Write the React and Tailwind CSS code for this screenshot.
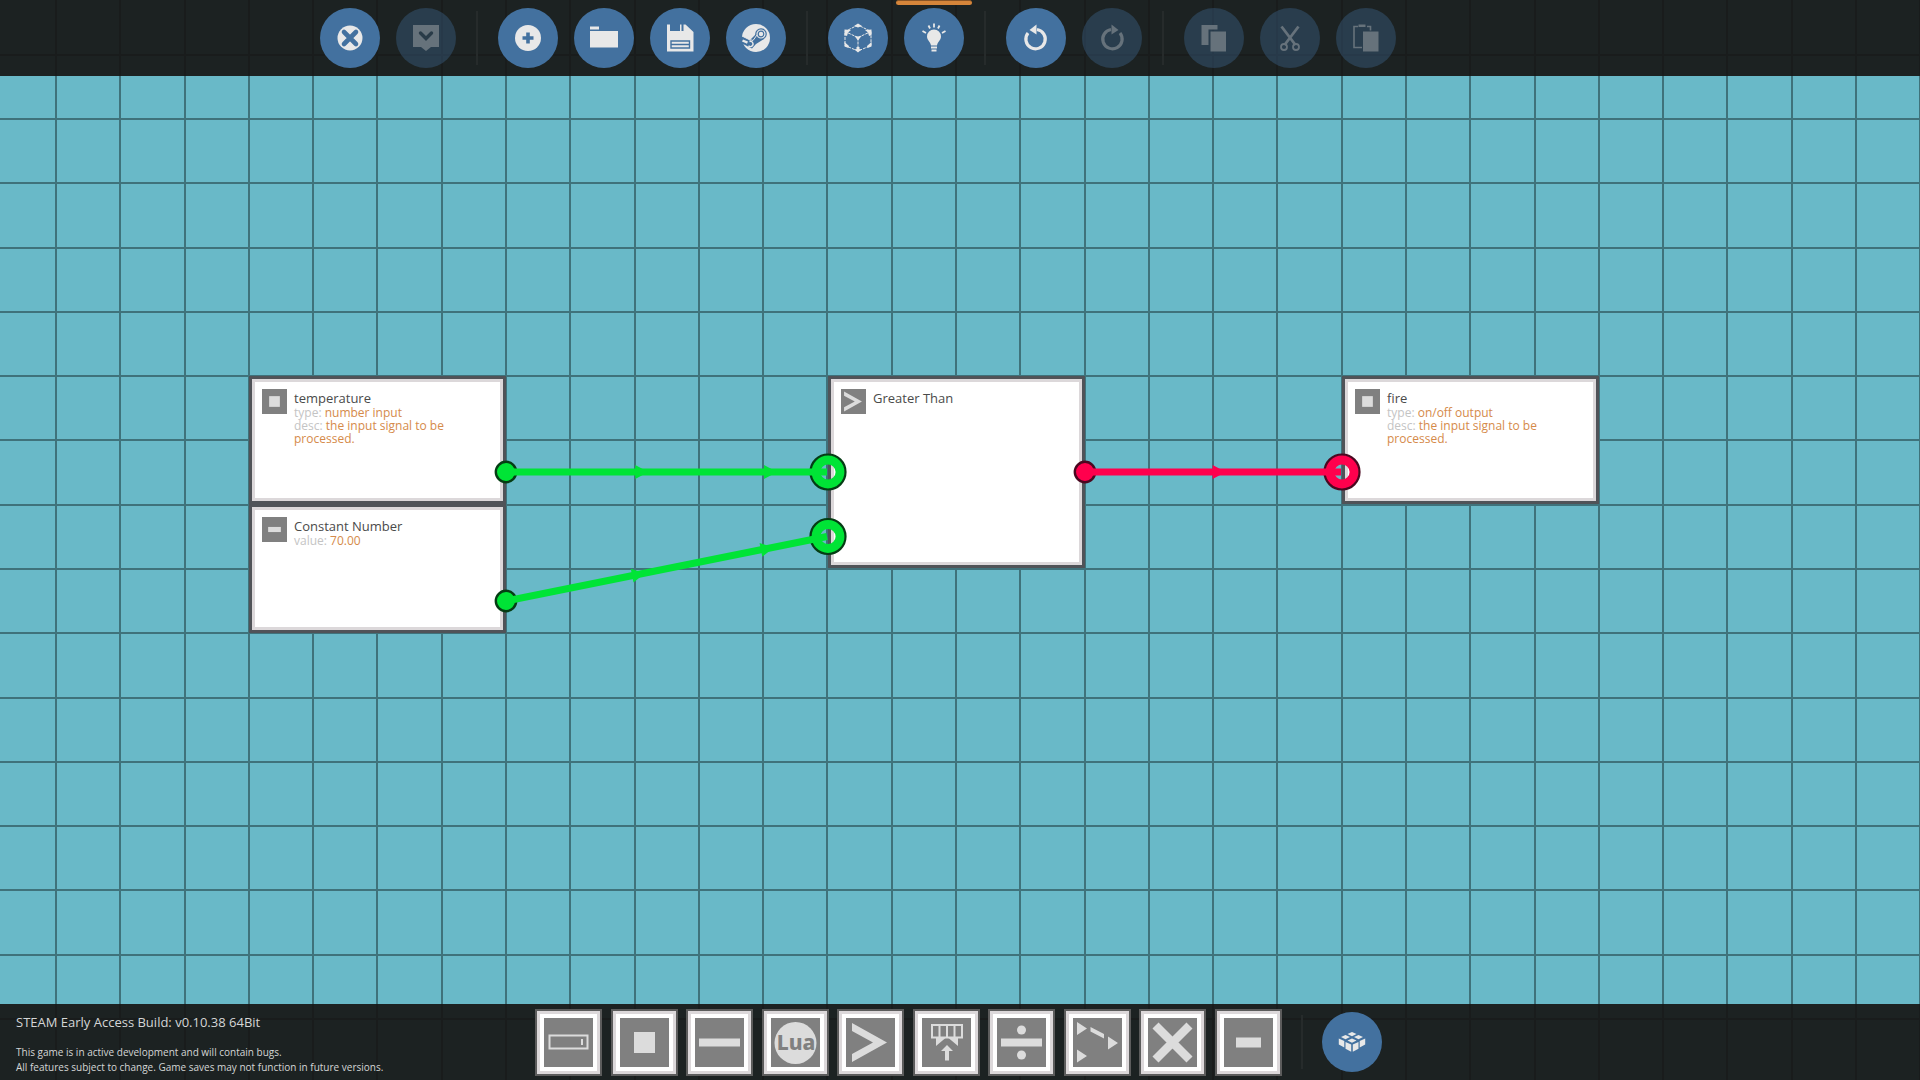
import { clsx } from "clsx";

const CELL = 450 / 7;

const range = (n) => Array.from({ length: n }, (_, i) => i);

/* ---------- toolbar icons ---------- */

const icons = {
  close: (
    <>
      <circle cx="15" cy="15" r="12.5" fill="currentColor" />
      <path d="M9 9l12 12M21 9L9 21" stroke="#43719f" strokeWidth="4.6" strokeLinecap="round" />
    </>
  ),
  apply: (
    <>
      <path d="M2 2h26v22h-8l-5 4-5-4H2z" fill="currentColor" />
      <path d="M9.500 10l5.500 5.500 5.500-5.500" stroke="#293b48" strokeWidth="3.400" strokeLinecap="round" fill="none" />
    </>
  ),
  add: (
    <>
      <circle cx="15" cy="15" r="13" fill="currentColor" />
      <path d="M15 9.500v11M9.500 15h11" stroke="#43719f" strokeWidth="3.600" />
    </>
  ),
  open: <path d="M1 3.500h9v3H1zM1 8h28v16.500H1z" fill="currentColor" />,
  save: (
    <>
      <path
        d="M2 1.500h3V8h10V1.500h1.500V8h2V1.500h2l8 7.500v19.500H2z"
        fill="currentColor"
      />
      <path d="M6 18h18.500v7H6zM6 21.500h18.500" stroke="#43719f" strokeWidth="1.400" fill="none" />
    </>
  ),
  steam: (
    <>
      <circle cx="15" cy="15" r="14" fill="currentColor" />
      <path d="M0 12.500l9 4.500 6-6 8 5-8 5-4 4.500L0 20z" fill="#43719f" />
      <circle cx="20" cy="11" r="5.800" fill="#43719f" />
      <circle cx="20" cy="11" r="4" fill="none" stroke="currentColor" strokeWidth="1.200" />
      <circle cx="20" cy="11" r="2.200" fill="currentColor" />
      <path d="M1 13l8 4a4.500 4.500 0 0 1 3 .5L16 12" fill="none" stroke="currentColor" strokeWidth="1" />
      <path d="M1.500 17.500l5 2.200" stroke="currentColor" strokeWidth="2.400" />
      <path d="M8.500 18.500a2.600 2.600 0 1 1-1 4.200" fill="none" stroke="currentColor" strokeWidth="1.400" />
    </>
  ),
  cube: (
    <>
      <path
        d="M15 2L2 8.500v14L15 28l13-5.500v-14zM15 14.500v13M15 14.500L2 8.500M15 14.500l13-6"
        fill="none"
        stroke="currentColor"
        strokeWidth="1"
        strokeDasharray="3 1"
      />
      <path
        d="M15 .5l4 2.500-4 1.500L11 3zM1.500 6.500l6.500.500-3 2.500-1 3.500-2.500-1zM28.500 6.500L22 7l3 2.500 1 3.500 2.500-1zM15 17.500l-3.500-4.500 3.500.500 3.500-.500zM1.500 19l4.500 4-.500 2-4-1.500zM28.500 19L24 23l.5 2 4-1.500zM13.500 24h3v2l2 .5L15 29.500l-3.500-3 2-.5z"
        fill="currentColor"
      />
    </>
  ),
  bulb: (
    <>
      <path d="M15 6.500a7 7 0 0 1 7 7c0 4-3.500 5-4 9h-6c-.5-4-4-5-4-9a7 7 0 0 1 7-7z" fill="currentColor" />
      <path
        d="M12 24.500h6M12.500 27.500h5M15 .5v4M9.500 2.500l1.500 3M20.500 2.500l-1.500 3M3.500 8l3.500 2M26.500 8L23 10"
        stroke="currentColor"
        strokeWidth="1.800"
      />
    </>
  ),
  undo: (
    <>
      <path d="M7 10a9.700 9.700 0 1 0 9-3.500" fill="none" stroke="currentColor" strokeWidth="3.200" />
      <path d="M15.500 1.500v10L8.500 7z" fill="currentColor" />
    </>
  ),
  redo: (
    <>
      <path d="M23 10a9.700 9.700 0 1 1-9-3.500" fill="none" stroke="currentColor" strokeWidth="3.200" />
      <path d="M14.500 1.500v10l7-4.500z" fill="currentColor" />
    </>
  ),
  copy: <path d="M2.500 2h16v4.500H9.500V22h-7zM11.500 8.500h15.500v20H11.500z" fill="currentColor" />,
  cut: (
    <>
      <path d="M6.500 3.500L20.500 22M23.500 3.500L9.500 22" stroke="currentColor" strokeWidth="2.800" />
      <circle cx="9" cy="24" r="3" fill="none" stroke="currentColor" strokeWidth="1.800" />
      <circle cx="21" cy="24" r="3" fill="none" stroke="currentColor" strokeWidth="1.800" />
    </>
  ),
  paste: (
    <>
      <path
        d="M7 3.500H3v21h8M16 3.500h3.500v4"
        fill="none"
        stroke="currentColor"
        strokeWidth="1.600"
      />
      <path d="M7.500 1.500h7V4h-7zM12 8.500h15.500v20H12z" fill="currentColor" />
    </>
  ),
  blocks: (
    <g fill="currentColor">
      <path d="M15 5l4.500 2L15 9.200 10.500 7zM8.500 8l4.500 2-4.500 2.200L4 10zM21.500 8l4.500 2-4.500 2.200L17 10zM15 11.500l4.500 2-4.500 2.200-4.500-2.200z" />
      <path d="M1.800 11.500l5.500 2.600v6.400l-5.500-3zM28.200 11.500l-5.500 2.600v6.400l5.500-3zM8.500 15l5.700 2.600v7.200l-5.700-3zM21.500 15l-5.700 2.600v7.200l5.700-3z" />
    </g>
  ),
};

/* ---------- component tile icons ---------- */

const tileIcons = {
  register: (
    <>
      <path d="M5.500 17.500h38v13h-38z" fill="none" stroke="currentColor" strokeWidth="2" />
      <path d="M38 21v6" stroke="currentColor" strokeWidth="2" />
    </>
  ),
  square: <path d="M14 14h21v21H14z" fill="currentColor" />,
  bar: <path d="M4 20.500h41v8H4z" fill="currentColor" />,
  lua: (
    <>
      <circle cx="24.500" cy="25" r="21" fill="currentColor" />
      <text x="25" y="32" textAnchor="middle" fill="#808080" fontSize="21" fontWeight="800" fontFamily="'Noto Sans', sans-serif">
        Lua
      </text>
    </>
  ),
  greater: <path d="M6 5l35 19.500L6 44v-8l21-11.500L6 13z" fill="currentColor" />,
  mux: (
    <>
      <path d="M10 7h30v12.500H10zM17.500 7v12.500M25 7v12.500M32.500 7v12.500" fill="none" stroke="currentColor" strokeWidth="2" />
      <path d="M14 19.500h22V28l-9.500-8h-3L14 28zM25 27l6 6h-4v9.500h-4V33h-4z" fill="currentColor" />
    </>
  ),
  divide: (
    <>
      <path d="M4 20.500h41v8H4z" fill="currentColor" />
      <circle cx="24.500" cy="12" r="4.500" fill="currentColor" />
      <circle cx="24.500" cy="37" r="4.500" fill="currentColor" />
    </>
  ),
  switchbox: <path d="M4 4l10 6.500L4 17zM4 31.500L14 38 4 44.500zM35 18.500l10 6.500-10 6.500zM17.500 9L31 16v4.500L17.500 13.500z" fill="currentColor" />,
  multiply: <path d="M7.500 7.500l34 34M41.500 7.500l-34 34" stroke="currentColor" strokeWidth="8.500" />,
  constant: <path d="M12 19.500h25v10H12z" fill="currentColor" />,
};

const tiles = [
  ["Property register", "register"],
  ["On/off", "square"],
  ["Subtract", "bar"],
  ["Lua script", "lua"],
  ["Greater than", "greater"],
  ["Multiplexer", "mux"],
  ["Divide", "divide"],
  ["Switchbox", "switchbox"],
  ["Multiply", "multiply"],
  ["Constant number", "constant"],
];

const toolbar = [
  [
    { label: "Close", icon: "close" },
    { label: "Apply", icon: "apply", disabled: true },
  ],
  [
    { label: "New", icon: "add" },
    { label: "Open", icon: "open" },
    { label: "Save", icon: "save" },
    { label: "Workshop", icon: "steam" },
  ],
  [
    { label: "Body view", icon: "cube" },
    { label: "Logic view", icon: "bulb", active: true },
  ],
  [
    { label: "Undo", icon: "undo" },
    { label: "Redo", icon: "redo", disabled: true },
  ],
  [
    { label: "Copy", icon: "copy", disabled: true },
    { label: "Cut", icon: "cut", disabled: true },
    { label: "Paste", icon: "paste", disabled: true },
  ],
];

const nodes = [
  {
    title: "temperature",
    icon: "square",
    place: "left-[249px] top-[376px] h-[128px]",
    props: [
      ["type", "number input"],
      ["desc", "the input signal to be processed."],
    ],
  },
  {
    title: "Constant Number",
    icon: "constant",
    place: "left-[249px] top-[504px] h-[129px]",
    props: [["value", "70.00"]],
  },
  {
    title: "Greater Than",
    icon: "greater",
    place: "left-[828px] top-[376px] h-[192px]",
    props: [],
  },
  {
    title: "fire",
    icon: "square",
    place: "left-[1342px] top-[376px] h-[128px]",
    props: [
      ["type", "on/off output"],
      ["desc", "the input signal to be processed."],
    ],
  },
];

const GREEN = { line: "#00e436", edge: "#053d14" };
const RED = { line: "#ff004d", edge: "#4a0820" };

const wires = [
  { from: [506, 472], to: [828, 472], color: GREEN, arrows: [0.42, 0.82] },
  { from: [506, 601], to: [828, 536.5], color: GREEN, arrows: [0.41, 0.81] },
  { from: [1085, 472], to: [1342, 472], color: RED, arrows: [0.52] },
];

function RoundButton({ label, icon, disabled, active }) {
  return (
    <div className="relative">
      {active && <span className="absolute -inset-x-2 -top-2 h-[5px] rounded-sm border-t border-[#8a5526] bg-[#d5853a]" />}
      <button
        type="button"
        aria-label={label}
        disabled={disabled}
        className={clsx(
          "flex size-[60px] items-center justify-center rounded-full",
          disabled ? "bg-[#43719f]/35 text-[#66727b]" : "bg-[#43719f] text-[#e8e8e8]"
        )}
      >
        <svg viewBox="0 0 30 30" className="size-[30px]">
          {icons[icon]}
        </svg>
      </button>
    </div>
  );
}

function Divider() {
  return <span className="mx-1 h-[54px] w-[2px] bg-[#262b2b]" />;
}

function TileIcon({ name, className }) {
  return (
    <svg viewBox="0 0 49 49" className={clsx("shrink-0 bg-[#808080] text-[#dcdcdc]", className)}>
      {tileIcons[name]}
    </svg>
  );
}

function Node({ title, icon, place, props }) {
  return (
    <article className={clsx("absolute w-[257px] border-3 border-[#505358] bg-[#dcd8da] p-[3px]", place)}>
      <div className="flex h-full gap-[7px] bg-white pt-[7px] pl-[7px]">
        <TileIcon name={icon} className="size-[25px]" />
        <div className="w-[170px] pt-[1px] text-[12px] leading-[13px] text-[#c4c4c4]">
          <h2 className="text-[13px] leading-[16px] text-[#4a4a4a]">{title}</h2>
          {props.map(([name, value]) => (
            <p key={name}>
              {name}: <span className="text-[#d58a4a]">{value}</span>
            </p>
          ))}
        </div>
      </div>
    </article>
  );
}

function GridLines() {
  return (
    <svg className="absolute inset-0 size-full" stroke="#3f727b" strokeWidth="2">
      {range(60).map((i) => {
        const x = Math.round(56 + (i - 1) * CELL);
        return <line key={i} x1={x} x2={x} y1="0" y2="100%" />;
      })}
      {range(40).map((i) => {
        const y = Math.round(119 + (i - 2) * CELL);
        return <line key={i} x1="0" x2="100%" y1={y} y2={y} />;
      })}
    </svg>
  );
}

function Wire({ from, to, color, arrows }) {
  const [x1, y1] = from;
  const [x2, y2] = to;
  const angle = (Math.atan2(y2 - y1, x2 - x1) * 180) / Math.PI;
  return (
    <g fill={color.line} stroke="none">
      <circle cx={x1} cy={y1} r="10.200" stroke={color.edge} strokeWidth="2.400" />
      <circle cx={x2} cy={y2} r="12.300" fill="none" stroke={color.line} strokeWidth="9.400" />
      <circle cx={x2} cy={y2} r="17.500" fill="none" stroke={color.edge} strokeWidth="2.200" />
      <line x1={x1} y1={y1} x2={x2 - 1} y2={y2} stroke={color.line} strokeWidth="7" />
      {arrows.map((t) => (
        <path
          key={t}
          d="M-6-7L7 0-6 7z"
          transform={`translate(${x1 + (x2 - x1) * t} ${y1 + (y2 - y1) * t}) rotate(${angle})`}
        />
      ))}
    </g>
  );
}

export default function App() {
  return (
    <div className="relative flex h-screen flex-col justify-between overflow-hidden bg-[#69b9c8] font-['Open_Sans','Noto_Sans',sans-serif]">
      <main className="absolute inset-0">
        <GridLines />
        {nodes.map((node) => (
          <Node key={node.title} {...node} />
        ))}
        <svg className="pointer-events-none absolute inset-0 size-full">
          {wires.map((wire) => (
            <Wire key={wire.from.join()} {...wire} />
          ))}
        </svg>
      </main>

      <header className="relative bg-[#161514]/92 py-2">
        <nav className="mx-auto flex max-w-7xl items-center gap-4">
          {toolbar.flatMap((group, i) => [
            i > 0 && <Divider key={`divider-${i}`} />,
            ...group.map((item) => <RoundButton key={item.label} {...item} />),
          ])}
        </nav>
      </header>

      <footer className="relative grid h-[76px] grid-cols-[1fr_auto_1fr] items-center bg-[#161514]/92 pr-[3px]">
        <div className="pt-1 pl-4 text-[#d4d6d6]">
          <p className="pb-[14px] text-[13px] leading-[18px]">STEAM Early Access Build: v0.10.38 64Bit</p>
          <p className="text-[10px] leading-[15px]">This game is in active development and will contain bugs.</p>
          <p className="text-[10px] leading-[15px]">All features subject to change. Game saves may not function in future versions.</p>
        </div>
        <div className="flex items-center gap-[15px]">
          <div className="flex w-[747px] justify-between">
            {tiles.map(([label, icon]) => (
              <button
                key={icon}
                type="button"
                aria-label={label}
                className="size-[67px] border-2 border-[#5c5c5c] bg-[#dcd8da] p-[3px]"
              >
                <span className="block bg-white p-[4px]">
                  <TileIcon name={icon} className="size-[49px]" />
                </span>
              </button>
            ))}
          </div>
          <Divider />
          <RoundButton label="Inventory" icon="blocks" />
        </div>
      </footer>
    </div>
  );
}
